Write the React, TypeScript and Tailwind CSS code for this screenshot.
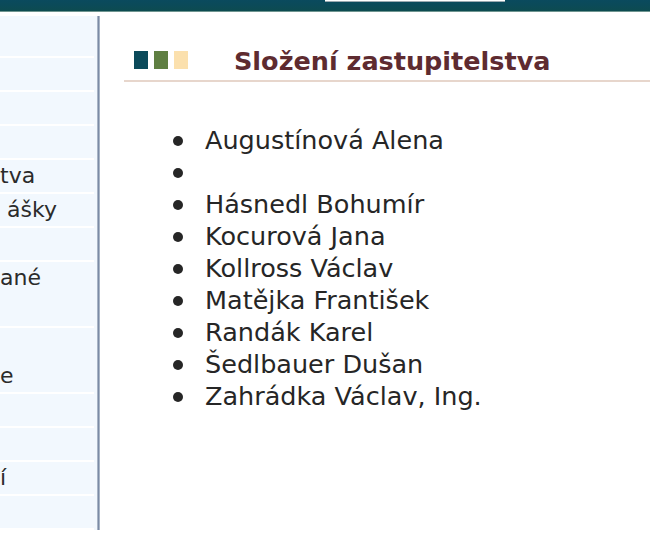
const members = [
  "Augustínová Alena",
  "",
  "Hásnedl Bohumír",
  "Kocurová Jana",
  "Kollross Václav",
  "Matějka František",
  "Randák Karel",
  "Šedlbauer Dušan",
  "Zahrádka Václav, Ing.",
];

// visible ends of the sidebar links (page is scrolled to the right)
const navRows: { text: string; indent?: string; tall?: boolean; second?: boolean; first?: boolean }[] = [
  { text: "", first: true },
  { text: "" },
  { text: "" },
  { text: "" },
  { text: "tva" },
  { text: "ášky", indent: "pl-[7px]" },
  { text: "" },
  { text: "ané", tall: true },
  { text: "e", tall: true, second: true },
  { text: "" },
  { text: "" },
  { text: "í" },
  { text: "" },
];

export default function App() {
  return (
    <div className="w-[650px] h-[538px] overflow-hidden bg-white font-['DejaVu_Sans',sans-serif] text-[#2b2b2b]">
      {/* top bar */}
      <div className="h-[12px] bg-gradient-to-b from-[#0a4a5e] via-[#0b4a58] to-[#0d4b50] border-b border-[#6f9590] relative">
        <div className="absolute left-[325px] top-0 w-[180px] h-[2px] bg-white border-b border-[#9aa9b0]" />
      </div>

      <div className="flex mt-[4px]">
        {/* sidebar */}
        <div className="w-[100px] flex shrink-0">
          <div className="w-[97px] bg-[#f2f8fe] pr-[3px]">
            {navRows.map((r, i) => (
              <div
                key={i}
                className={`${r.first ? "h-[42px]" : r.tall ? "h-[66px]" : "h-[34px]"} border-b-2 border-white text-[22px] leading-[32px] whitespace-nowrap`}
              >
                {r.first ? null : r.second ? (
                  <>
                    <div>&nbsp;</div>
                    <div>{r.text}</div>
                  </>
                ) : (
                  <div className={r.indent}>{r.text || "\u00a0"}</div>
                )}
              </div>
            ))}
          </div>
          <div className="w-[3px] bg-[#7b8ba6] border-x border-[#a9b5c6]" />
        </div>

        {/* content */}
        <div className="flex-1 pl-[24px]">
          <div className="flex items-center h-[66px] pt-[24px] border-b-2 border-[#e7d6cc]">
            <div className="flex gap-[6px] ml-[10px]">
              <span className="w-[14px] h-[18px] bg-[#0b4a5a]" />
              <span className="w-[14px] h-[18px] bg-[#5f7f42]" />
              <span className="w-[14px] h-[18px] bg-[#fbe0ad]" />
            </div>
            <h1 className="ml-[46px] mt-[4px] text-[25.5px] font-bold text-[#5e2b30] leading-none">
              Složení zastupitelstva
            </h1>
          </div>

          <ul className="pl-[49px] mt-[42px] text-[25.5px] leading-[32px] text-[#262626]">
            {members.map((m, i) => (
              <li key={i} className="flex items-center h-[32px]">
                <span className="w-[10px] h-[10px] rounded-full bg-[#262626] shrink-0 mt-[2px]" />
                <span className="ml-[22px]">{m || "\u00a0"}</span>
              </li>
            ))}
          </ul>
        </div>
      </div>
    </div>
  );
}
